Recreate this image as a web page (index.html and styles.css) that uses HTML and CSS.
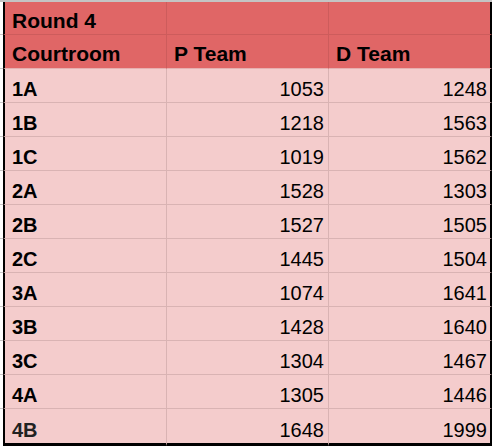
FILE: index.html
```html
<!DOCTYPE html>
<html>
<head>
<meta charset="utf-8">
<link rel="stylesheet" href="styles.css">
</head>
<body>
<div class="sheet">
  <div class="row head first">
    <div class="gutter"></div>
    <div class="cell a">Round 4</div>
    <div class="cell b"></div>
    <div class="cell c"></div>
  </div>
  <div class="row head">
    <div class="gutter"></div>
    <div class="cell a">Courtroom</div>
    <div class="cell b">P Team</div>
    <div class="cell c">D Team</div>
  </div>
  <div class="row data"><div class="gutter"></div><div class="cell a">1A</div><div class="cell b num">1053</div><div class="cell c num">1248</div></div>
  <div class="row data"><div class="gutter"></div><div class="cell a">1B</div><div class="cell b num">1218</div><div class="cell c num">1563</div></div>
  <div class="row data"><div class="gutter"></div><div class="cell a">1C</div><div class="cell b num">1019</div><div class="cell c num">1562</div></div>
  <div class="row data"><div class="gutter"></div><div class="cell a">2A</div><div class="cell b num">1528</div><div class="cell c num">1303</div></div>
  <div class="row data"><div class="gutter"></div><div class="cell a">2B</div><div class="cell b num">1527</div><div class="cell c num">1505</div></div>
  <div class="row data"><div class="gutter"></div><div class="cell a">2C</div><div class="cell b num">1445</div><div class="cell c num">1504</div></div>
  <div class="row data"><div class="gutter"></div><div class="cell a">3A</div><div class="cell b num">1074</div><div class="cell c num">1641</div></div>
  <div class="row data"><div class="gutter"></div><div class="cell a">3B</div><div class="cell b num">1428</div><div class="cell c num">1640</div></div>
  <div class="row data"><div class="gutter"></div><div class="cell a">3C</div><div class="cell b num">1304</div><div class="cell c num">1467</div></div>
  <div class="row data"><div class="gutter"></div><div class="cell a">4A</div><div class="cell b num">1305</div><div class="cell c num">1446</div></div>
  <div class="row data last"><div class="gutter"></div><div class="cell a dim">4B</div><div class="cell b num">1648</div><div class="cell c num">1999</div></div>
</div>
</body>
</html>
```

FILE: styles.css
```css
html, body {
  margin: 0;
  padding: 0;
  background: #ffffff;
}

.sheet {
  width: 492px;
  border-top: 2px solid #c4c4c4;
  font-family: "Liberation Sans", Arial, sans-serif;
  font-size: 20px;
  color: #000;
}

.row {
  display: grid;
  grid-template-columns: 3px 164px 162px 163px;
  height: 34px;
  box-sizing: border-box;
}

.row.first {
  height: 33px;
}

.row.last {
  height: 37px;
}

.gutter {
  background: #fff;
  border-bottom: 1px solid #c8c8c8;
}

.row.last .gutter {
  border-bottom: none;
}

.cell {
  box-sizing: border-box;
  line-height: 20px;
  padding: 10px 4px 0 7px;
  white-space: nowrap;
  overflow: hidden;
}

.cell.a {
  border-left: 2px solid #000;
  border-right: 1px solid var(--grid);
  font-weight: bold;
}

.cell.b {
  border-right: 1px solid var(--grid);
}

.cell.c {
  border-right: 2px solid #000;
  padding-right: 3px;
}

.head .cell {
  --grid: #cd5c5c;
  background: #e06666;
  border-bottom: 1px solid #cd5c5c;
  font-weight: bold;
  font-size: 21px;
  padding-top: 9px;
}

.data .cell {
  --grid: #d9b3b3;
  background: #f4cccc;
  border-bottom: 1px solid #d9b3b3;
}

.row.head:nth-child(2) .cell {
  border-bottom-color: #e6b0b0;
}

.data.last .cell {
  border-bottom: 3px solid #000;
  padding-top: 11px;
}

.num {
  text-align: right;
}

.dim {
  color: #222;
}
```
